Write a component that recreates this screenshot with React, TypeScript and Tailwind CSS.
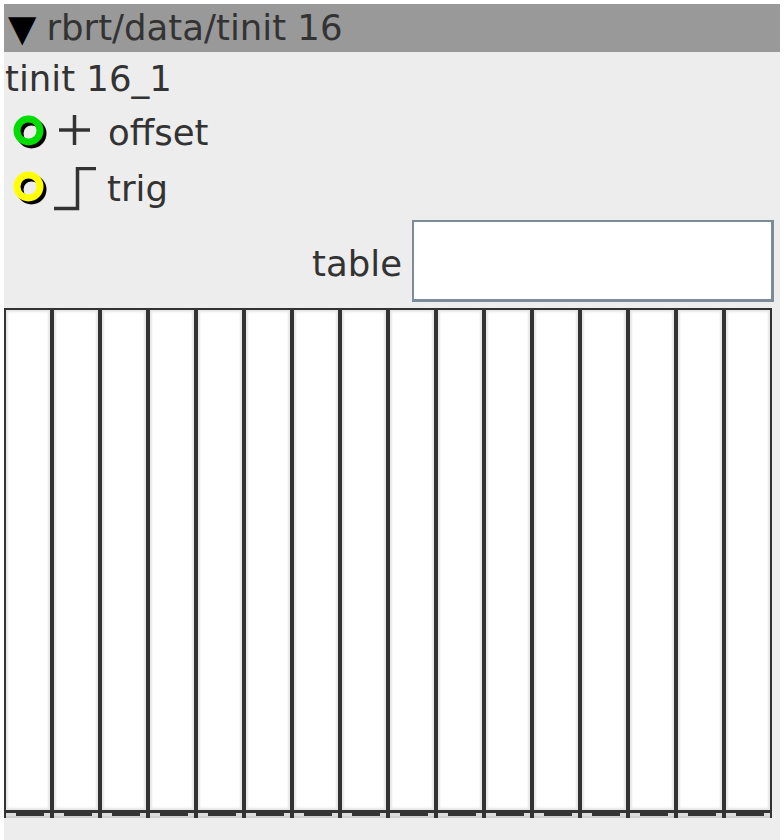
import React from "react";

const cells = Array.from({ length: 16 }, (_, i) => i);

function Port({ color }: { color: string }) {
  return (
    <svg width="36" height="36" viewBox="0 0 36 36" className="shrink-0">
      <circle cx="18.5" cy="18.5" r="11.5" fill="none" stroke="#000" strokeWidth="7" />
      <circle cx="15.5" cy="15.5" r="11.5" fill="none" stroke={color} strokeWidth="7" />
    </svg>
  );
}

export default function App() {
  return (
    <div className="bg-white pt-1 pl-1 w-[784px] h-[840px]" style={{ fontFamily: "'DejaVu Sans', sans-serif" }}>
      <div className="w-[776px] h-[836px] bg-[#ededed] text-[#333] flex flex-col">
        <div className="h-[48px] bg-[#999] flex items-center pl-[4px] text-[35.5px] leading-none">
          <span className="text-[37px] leading-none text-black">▼</span>
          <span className="ml-[10px]">rbrt/data/tinit 16</span>
        </div>
        <div className="h-[53px] flex items-center pl-[1px] text-[35.5px] leading-none">tinit 16_1</div>
        <div className="h-[56px] flex items-center pl-[9px] text-[35.5px] leading-none">
          <Port color="#00dd00" />
          <svg width="40" height="36" viewBox="0 0 40 36" className="ml-[6px]">
            <line x1="4" y1="15" x2="35" y2="15" stroke="#333" strokeWidth="3.5" />
            <line x1="19.5" y1="0" x2="19.5" y2="30" stroke="#333" strokeWidth="3.5" />
          </svg>
          <span className="ml-[13px]">offset</span>
        </div>
        <div className="h-[56px] flex items-center pl-[9px] text-[35.5px] leading-none">
          <Port color="#ffff00" />
          <svg width="44" height="44" viewBox="0 0 44 44" className="ml-[5px]">
            <polyline points="0,41.5 23.5,41.5 23.5,1.5 42,1.5" fill="none" stroke="#333" strokeWidth="3.5" />
          </svg>
          <span className="ml-[9px]">trig</span>
        </div>
        <div className="h-[87px] flex items-center justify-end pr-[6px] gap-[10px] text-[35.5px] leading-none">
          <span className="pt-[6px]">table</span>
          <div className="w-[362px] h-[82px] bg-white border-t-2 border-l-2 border-r-[3px] border-b-[3px] border-[#7d8a97]" />
        </div>
        <div className="mt-[4px] flex w-[768px]">
          {cells.map((i) => (
            <div key={i} className="w-[48px] h-[510px] flex flex-col border-x-2 border-t-2 border-[#333]">
              <div className="flex-1 bg-white shadow-[inset_0_0_2px_2px_#e6e6e6]" />
              <div className="h-[3px] bg-[#333]" />
              <div className="h-[3px] bg-[#dcdcdc] flex">
                <div className="ml-[10px] w-[28px] bg-[#333]" />
              </div>
              <div className="h-[2px] bg-[#d0d0d0]" />
            </div>
          ))}
        </div>
      </div>
    </div>
  );
}
